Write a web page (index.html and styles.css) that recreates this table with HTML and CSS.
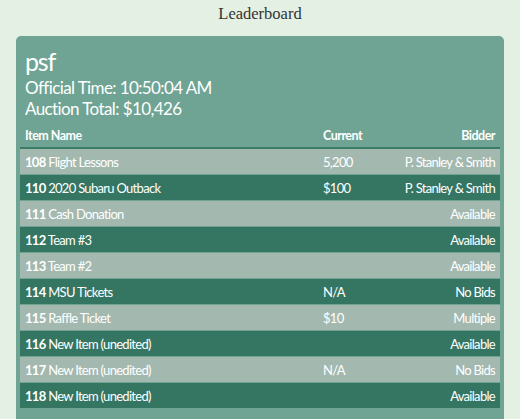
FILE: index.html
```html
<!DOCTYPE html>
<html>
<head>
<meta charset="utf-8">
<link rel="stylesheet" href="styles.css">
</head>
<body>
<h1 class="title">Leaderboard</h1>
<div class="card">
  <div class="card-head">
    <div class="name">psf</div>
    <div class="info">Official Time: 10:50:04 AM</div>
    <div class="info">Auction Total: $10,426</div>
  </div>
  <table class="board">
    <colgroup><col class="w-item"><col class="w-cur"><col></colgroup>
    <thead>
      <tr><th>Item Name</th><th>Current</th><th class="c-bid">Bidder</th></tr>
    </thead>
    <tbody>
      <tr class="light"><td><b>108</b> Flight Lessons</td><td>5,200</td><td class="c-bid">P. Stanley &amp; Smith</td></tr>
      <tr class="dark"><td><b>110</b> 2020 Subaru Outback</td><td>$100</td><td class="c-bid">P. Stanley &amp; Smith</td></tr>
      <tr class="light"><td><b>111</b> Cash Donation</td><td></td><td class="c-bid">Available</td></tr>
      <tr class="dark"><td><b>112</b> Team #3</td><td></td><td class="c-bid">Available</td></tr>
      <tr class="light"><td><b>113</b> Team #2</td><td></td><td class="c-bid">Available</td></tr>
      <tr class="dark"><td><b>114</b> MSU Tickets</td><td>N/A</td><td class="c-bid">No Bids</td></tr>
      <tr class="light"><td><b>115</b> Raffle Ticket</td><td>$10</td><td class="c-bid">Multiple</td></tr>
      <tr class="dark"><td><b>116</b> New Item (unedited)</td><td></td><td class="c-bid">Available</td></tr>
      <tr class="light"><td><b>117</b> New Item (unedited)</td><td>N/A</td><td class="c-bid">No Bids</td></tr>
      <tr class="dark"><td><b>118</b> New Item (unedited)</td><td></td><td class="c-bid">Available</td></tr>
    </tbody>
  </table>
</div>
</body>
</html>
```
FILE: styles.css
```css
html, body {
  margin: 0;
  padding: 0;
  background: #e4f0e4;
}
body {
  font-family: Lato, "Open Sans", sans-serif;
  color: #fff;
}
.title {
  margin: 0 0 10px;
  padding-top: 2px;
  height: 24px;
  line-height: 24px;
  text-align: center;
  font-family: "Liberation Serif", serif;
  font-weight: normal;
  font-size: 16.5px;
  color: #333;
}
.card {
  margin: 0 16px;
  background: #6fa494;
  border-radius: 5px;
  padding: 9px 4px 20px;
}
.card-head {
  padding: 0 5px;
}
.name {
  font-size: 25px;
  line-height: 32px;
  letter-spacing: -1.2px;
}
.info {
  font-size: 17px;
  line-height: 21px;
  letter-spacing: -0.6px;
}
.board {
  width: 100%;
  table-layout: fixed;
  border-collapse: collapse;
  margin-top: 3px;
  font-size: 13px;
  letter-spacing: -0.7px;
}
.w-item { width: 298px; }
.w-cur { width: 70px; }
.board th {
  font-weight: bold;
  font-size: 12.5px;
  letter-spacing: -0.5px;
  text-align: left;
  padding: 6px 5px 4px;
  border-bottom: 2px solid #3b7d69;
}
.board td {
  height: 25px;
  padding: 0 5px;
  border-top: 1px solid #6fa494;
  white-space: nowrap;
}
.board .c-bid { text-align: right; }
.light { background: #a3b9b0; }
.dark { background: #357663; }
```
